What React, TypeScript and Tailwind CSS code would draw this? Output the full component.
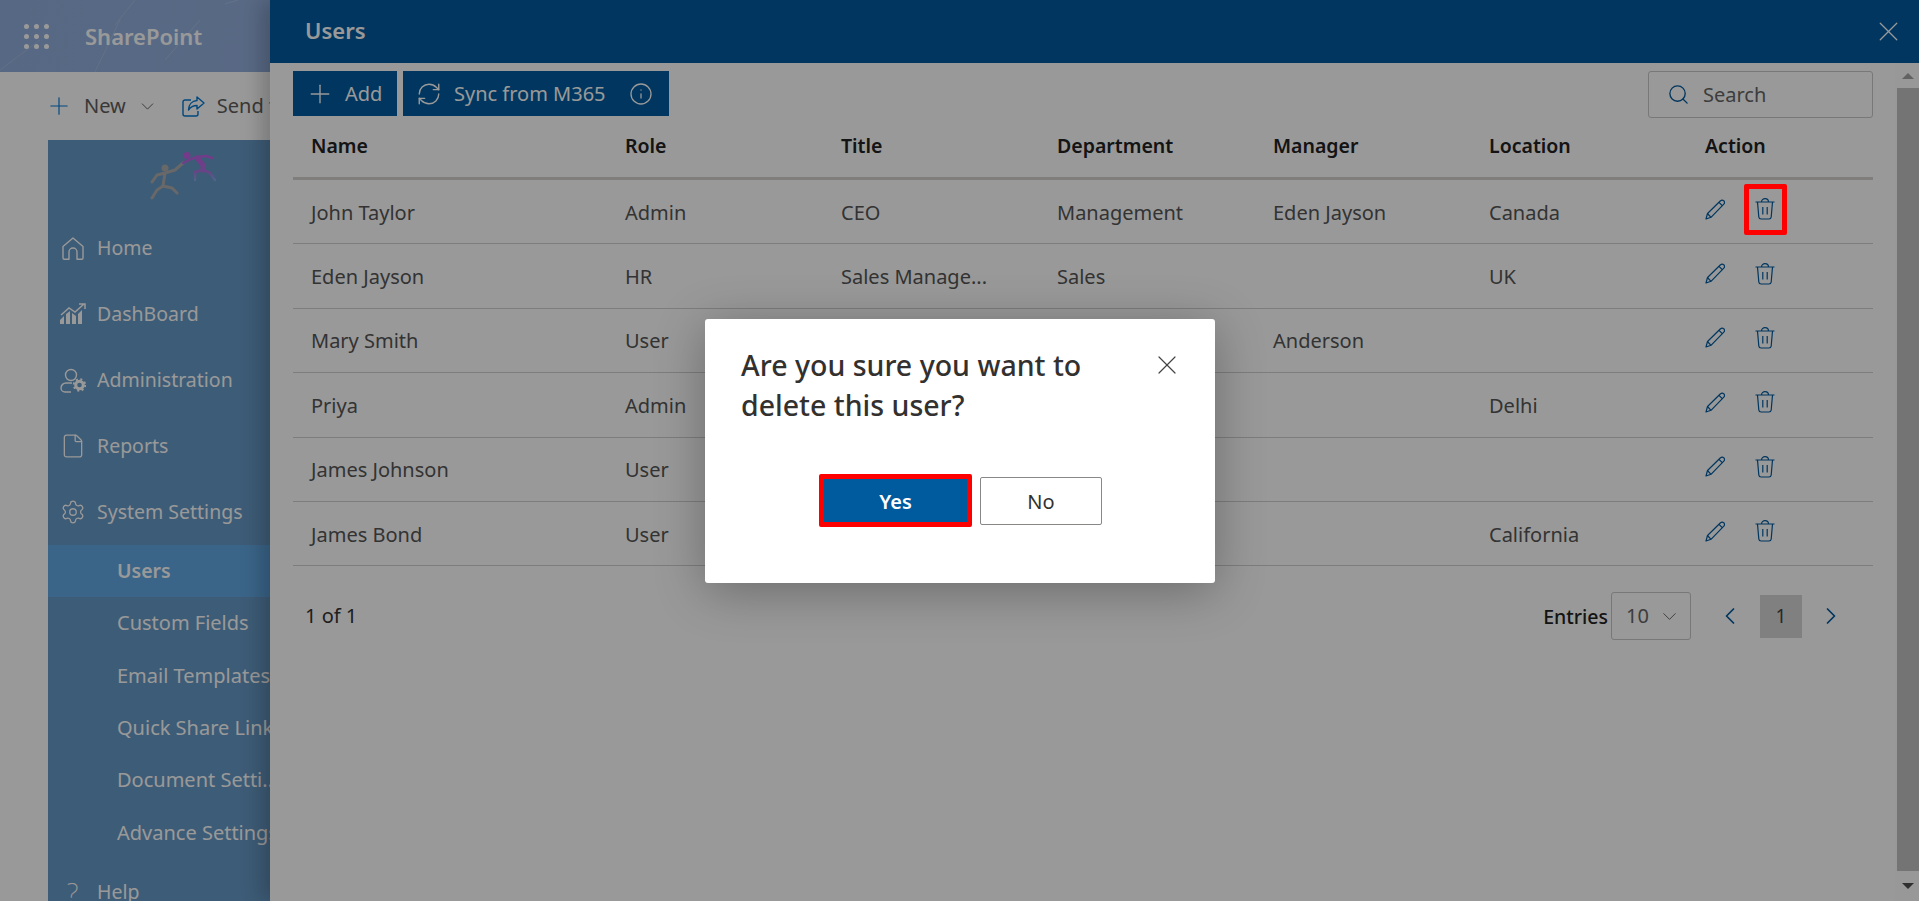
import { ChevronDown, ChevronLeft, ChevronRight, File, Info, Plus, RefreshCw, Search, Settings, X } from "lucide-react";

const FONT = "font-['Noto_Sans','Open_Sans',sans-serif]";

const USERS = [
  { name: "John Taylor", role: "Admin", title: "CEO", department: "Management", manager: "Eden Jayson", location: "Canada" },
  { name: "Eden Jayson", role: "HR", title: "Sales Manage...", department: "Sales", manager: "", location: "UK" },
  { name: "Mary Smith", role: "User", title: "", department: "", manager: "Anderson", location: "" },
  { name: "Priya", role: "Admin", title: "", department: "", manager: "", location: "Delhi" },
  { name: "James Johnson", role: "User", title: "", department: "", manager: "", location: "" },
  { name: "James Bond", role: "User", title: "", department: "", manager: "", location: "California" },
];

const SUB_ITEMS = ["Custom Fields", "Email Templates", "Quick Share Links", "Document Setti...", "Advance Settings"];

function Waffle() {
  return (
    <div className="grid grid-cols-3 gap-[5px]">
      {Array.from({ length: 9 }).map((_, i) => (
        <span key={i} className="h-[5px] w-[5px] rounded-full bg-white" />
      ))}
    </div>
  );
}

function HomeIcon() {
  return (
    <svg width="24" height="25" viewBox="0 0 24 25" fill="none" stroke="currentColor" strokeWidth="1.4">
      <path d="M2 10.500 12 2l10 8.500V22a1.200 1.200 0 0 1-1.200 1.200H16V16a4 4 0 0 0-8 0v7.200H3.200A1.200 1.200 0 0 1 2 22Z" strokeLinejoin="round" />
    </svg>
  );
}

function ChartIcon() {
  return (
    <svg width="26" height="22" viewBox="0 0 26 22" fill="currentColor">
      <path d="M0 21v-4l4-4v8Zm6 0V11l4-3v13Zm6 0V10l4 3v8Zm6 0V11l4-4v14Z" />
      <path d="M1 12 9 5l6 4 9-8M19 1h6v5" fill="none" stroke="currentColor" strokeWidth="1.5" />
    </svg>
  );
}

function AdminIcon() {
  return (
    <svg width="26" height="25" viewBox="0 0 26 25" fill="none" stroke="currentColor" strokeWidth="1.400">
      <circle cx="11" cy="7" r="5.500" />
      <path d="M11 24H5a4 4 0 0 1-4-4c0-3 2.500-5 5-5h6" />
      <circle cx="19.500" cy="17" r="3.800" strokeWidth="3" />
      <circle cx="19.500" cy="17" r="5.700" strokeWidth="2" strokeDasharray="2 2.500" />
    </svg>
  );
}

function SendIcon() {
  return (
    <svg width="23" height="21" viewBox="0 0 23 21" fill="none" stroke="currentColor" strokeWidth="1.400">
      <path d="M9 4H3a2 2 0 0 0-2 2v12a2 2 0 0 0 2 2h11a2 2 0 0 0 2-2v-3" />
      <path d="M15 1l7 6-7 6V9.500c-4 0-6.500 1.500-8.500 4.500 0-5.500 3.500-9 8.500-9.500Z" strokeLinejoin="round" />
    </svg>
  );
}

function PencilIcon() {
  return (
    <svg width="21" height="21" viewBox="0 0 21 21" fill="none" stroke="currentColor" strokeWidth="1.200" className="text-[#005a9e]">
      <path d="M1 20l1.500-5.500L15.500 1.800a2.300 2.300 0 0 1 3.300 0 2.300 2.300 0 0 1 0 3.300L6 18.300Z" strokeLinejoin="round" />
      <path d="M2.500 14.500l3.500 3.800M14 3.300l3.500 3.500" />
    </svg>
  );
}

function TrashIcon() {
  return (
    <svg width="20" height="22" viewBox="0 0 20 22" fill="none" stroke="currentColor" strokeWidth="1.200" className="text-[#005a9e]">
      <path d="M.500 4h19M6.500 4c0-2 1.500-3.300 3.500-3.300S13.500 2 13.500 4" />
      <path d="M2.500 4l1.300 15a2.300 2.300 0 0 0 2.300 2h7.800a2.300 2.300 0 0 0 2.300-2L17.500 4" />
      <path d="M7.800 9v7.500M12.200 9v7.500" />
    </svg>
  );
}

function Logo() {
  return (
    <svg width="67" height="48" viewBox="0 0 67 48" fill="none" strokeLinecap="round" strokeLinejoin="round">
      <defs>
        <linearGradient id="logoFill" gradientUnits="userSpaceOnUse" x1="0" y1="4" x2="0" y2="30">
          <stop offset="0" stopColor="#c063e6" />
          <stop offset="0.6" stopColor="#b070e0" />
          <stop offset="1" stopColor="#76b4e8" />
        </linearGradient>
      </defs>
      <circle cx="15" cy="16" r="3.500" fill="#b0adad" />
      <path d="M2 30 7 23 15 21 25 18 33 11M15 21 13 34" stroke="#b0adad" strokeWidth="3" />
      <path d="M13 34 7 38 2 46M13 34 22 36 27 41" stroke="#b0adad" strokeWidth="3" />
      <circle cx="37" cy="3.500" r="3.500" fill="#c063e6" />
      <path d="M33 11 41 7 47 5 56 4 62 6" stroke="url(#logoFill)" strokeWidth="2.500" />
      <path d="M47 6 53 13 53 18" stroke="url(#logoFill)" strokeWidth="5" />
      <path d="M53 18 45 20 45 28M53 18 60 21 65 28" stroke="url(#logoFill)" strokeWidth="2.500" />
    </svg>
  );
}

export default function App() {
  return (
    <div className={`relative h-[901px] w-full overflow-hidden bg-white ${FONT}`}>
      {/* sharepoint page behind the panel */}
      <div className="flex h-full flex-col">
        <div className="relative flex h-[72px] shrink-0 items-center gap-[36px] overflow-hidden bg-[linear-gradient(100deg,#90aedb_0%,#97b2e0_25%,#8ea8d2_55%,#829cc6_100%)] pl-[24px]">
          <svg className="absolute top-0 left-0" width="270" height="72" viewBox="0 0 270 72" fill="none" stroke="#fff" strokeOpacity="0.18">
            <path d="M0 70 40 40M95 72 120 20M115 25 135 0M165 60 200 20M225 4 238 0" />
          </svg>
          <Waffle />
          <span className="relative text-[22px] font-semibold text-white">SharePoint</span>
        </div>
        <div className="flex h-[68px] shrink-0 items-center pl-[45px] text-[20px] text-[#605e5c]">
          <Plus size={28} strokeWidth={1} className="text-[#0078d4]" />
          <span className="ml-[11px]">New</span>
          <ChevronDown size={21} strokeWidth={1.1} className="ml-[11px]" />
          <span className="ml-[24px] text-[#0078d4]"><SendIcon /></span>
          <span className="ml-[12px]">Send to</span>
        </div>
        <div className="ml-[48px] flex flex-1 flex-col overflow-hidden bg-[#6799c6] text-[19.5px] text-white">
          <div className="flex h-[75px] shrink-0 items-start pt-[12px] pl-[102px]">
            <Logo />
          </div>
          {[
            { label: "Home", icon: <HomeIcon /> },
            { label: "DashBoard", icon: <ChartIcon /> },
            { label: "Administration", icon: <AdminIcon /> },
            { label: "Reports", icon: <File size={26} strokeWidth={1.2} /> },
            { label: "System Settings", icon: <Settings size={26} strokeWidth={1.2} /> },
          ].map((item) => (
            <div key={item.label} className="flex h-[66px] shrink-0 items-center">
              <span className="flex w-[49px] justify-center pl-[1px]">{item.icon}</span>
              <span className="whitespace-nowrap">{item.label}</span>
            </div>
          ))}
          <div className="flex h-[52px] shrink-0 items-center bg-[#61a7e3] pl-[69px] font-semibold">Users</div>
          {SUB_ITEMS.map((label) => (
            <div key={label} className="flex h-[52.4px] shrink-0 items-center pl-[69px] text-[20px] whitespace-nowrap">
              {label}
            </div>
          ))}
          <div className="flex h-[66px] shrink-0 items-center">
            <span className="flex w-[49px] justify-center text-[28px] font-extralight">?</span>
            <span>Help</span>
          </div>
        </div>
      </div>

      {/* users panel */}
      <div className="absolute top-0 right-0 bottom-0 left-[270px] flex flex-col bg-white shadow-[-8px_0_20px_rgba(0,0,0,0.22)]">
        <div className="flex h-[63px] shrink-0 items-center justify-between bg-[#005a9e] pr-[14px] pl-[35px] text-white">
          <span className="mb-[3px] text-[22px] font-semibold">Users</span>
          <X size={33} strokeWidth={0.9} />
        </div>
        <div className="flex min-h-0 flex-1">
          <div className="min-w-0 flex-1 pt-[8px] pl-[23px]">
            <div className="flex h-[47px] w-[1580px] items-start justify-between">
              <div className="flex gap-[6px] text-[20px] text-white">
                <button className="flex h-[45px] w-[104px] items-center bg-[#005a9e] pl-[12px]">
                  <Plus size={30} strokeWidth={1.1} />
                  <span className="ml-[10px]">Add</span>
                </button>
                <button className="flex h-[45px] w-[266px] items-center bg-[#005a9e] pl-[13px]">
                  <RefreshCw size={26} strokeWidth={1.3} />
                  <span className="ml-[12px] whitespace-nowrap">Sync from M365</span>
                  <Info size={24} strokeWidth={1.3} className="ml-[23px]" />
                </button>
              </div>
              <div className="flex h-[47px] w-[225px] items-center rounded-[3px] border border-[#c8c8c8] pl-[18px] text-[20px] text-[#666]">
                <Search size={23} strokeWidth={1.4} className="text-[#005a9e]" />
                <span className="mt-[1px] ml-[13px]">Search</span>
              </div>
            </div>

            <div className="grid h-[62px] w-[1580px] grid-cols-[314px_repeat(5,216px)_186px] items-center border-b-[3px] border-[#d6d0d0] pb-[3px] text-[19.5px] font-semibold text-[#222]">
              {["Name", "Role", "Title", "Department", "Manager", "Location", "Action"].map((h) => (
                <div key={h} className="pl-[18px]">{h}</div>
              ))}
            </div>

            {USERS.map((u) => (
              <div
                key={u.name}
                className="grid h-[64.4px] w-[1580px] grid-cols-[314px_repeat(5,216px)_186px] items-center border-b border-[#d3d0d0] pt-[2px] text-[20px] text-[#555]"
              >
                <div className="pl-[18px]">{u.name}</div>
                <div className="pl-[18px]">{u.role}</div>
                <div className="pl-[18px]">{u.title}</div>
                <div className="pl-[18px]">{u.department}</div>
                <div className="pl-[18px]">{u.manager}</div>
                <div className="pl-[18px]">{u.location}</div>
                <div className="mb-[7px] flex items-center gap-[29px] pl-[18px]">
                  <PencilIcon />
                  <TrashIcon />
                </div>
              </div>
            ))}

            <div className="flex w-[1580px] items-center justify-between pt-[26px] pl-[12px]">
              <span className="text-[20px] text-[#333]">1 of 1</span>
              <div className="flex items-center pr-[28px]">
                <span className="mr-[3px] text-[19.5px] font-medium text-[#222]">Entries</span>
                <div className="flex h-[48px] w-[80px] items-center rounded-[3px] border border-[#c8c8c8] pl-[14px] text-[20px] text-[#666]">
                  10
                  <ChevronDown size={23} strokeWidth={1} className="ml-[9px]" />
                </div>
                <ChevronLeft size={28} strokeWidth={1.5} className="ml-[25px] text-[#005a9e]" />
                <div className="ml-[16px] flex h-[43px] w-[42px] items-center justify-center bg-[#d6d6d6] text-[19px] text-[#444]">1</div>
                <ChevronRight size={28} strokeWidth={1.5} className="ml-[15px] text-[#005a9e]" />
              </div>
            </div>
          </div>
          <div className="flex w-[24px] shrink-0 flex-col items-center bg-[#fdfdfd] pl-[2px]">
            <div className="flex h-[25px] items-center justify-center">
              <span className="mt-[1px] h-0 w-0 border-x-[6px] border-b-[6px] border-x-transparent border-b-[#a3a3a3]" />
            </div>
            <div className="w-full flex-1 bg-[#c1c1c1]" />
            <div className="flex h-[30px] items-center justify-center">
              <span className="h-0 w-0 border-x-[6px] border-t-[6px] border-x-transparent border-t-[#505050]" />
            </div>
          </div>
        </div>
      </div>

      {/* modal backdrop + dialog */}
      <div className="absolute inset-0 bg-black/40" />
      <div className="absolute top-[319px] left-[705px] flex h-[264px] w-[510px] flex-col rounded-[3px] bg-white pt-[26px] pl-[36px] shadow-[0_8px_50px_rgba(0,0,0,0.3)]">
        <div className="flex items-start justify-between pr-[32px]">
          <p className="w-[370px] text-[28.5px] leading-[40px] font-medium text-[#323130]">
            Are you sure you want to delete this user?
          </p>
          <X size={32} strokeWidth={0.9} className="mt-[4px] text-[#444]" />
        </div>
        <div className="mt-[49px] flex items-center gap-[8px] pl-[78px]">
          <button className="h-[53px] w-[153px] rounded-[2px] border-[5px] border-[#ff0000] bg-[#005a9e] pt-[2px] text-[20px] font-semibold text-white">Yes</button>
          <button className="h-[48px] w-[122px] rounded-[2px] border border-[#8a8886] bg-white pt-[2px] text-[20px] text-[#323130]">No</button>
        </div>
      </div>

      {/* red annotation around the delete icon */}
      <div className="absolute top-[184px] left-[1744px] h-[51px] w-[43px] rounded-[2px] border-[5px] border-[#ff0000]" />
    </div>
  );
}
